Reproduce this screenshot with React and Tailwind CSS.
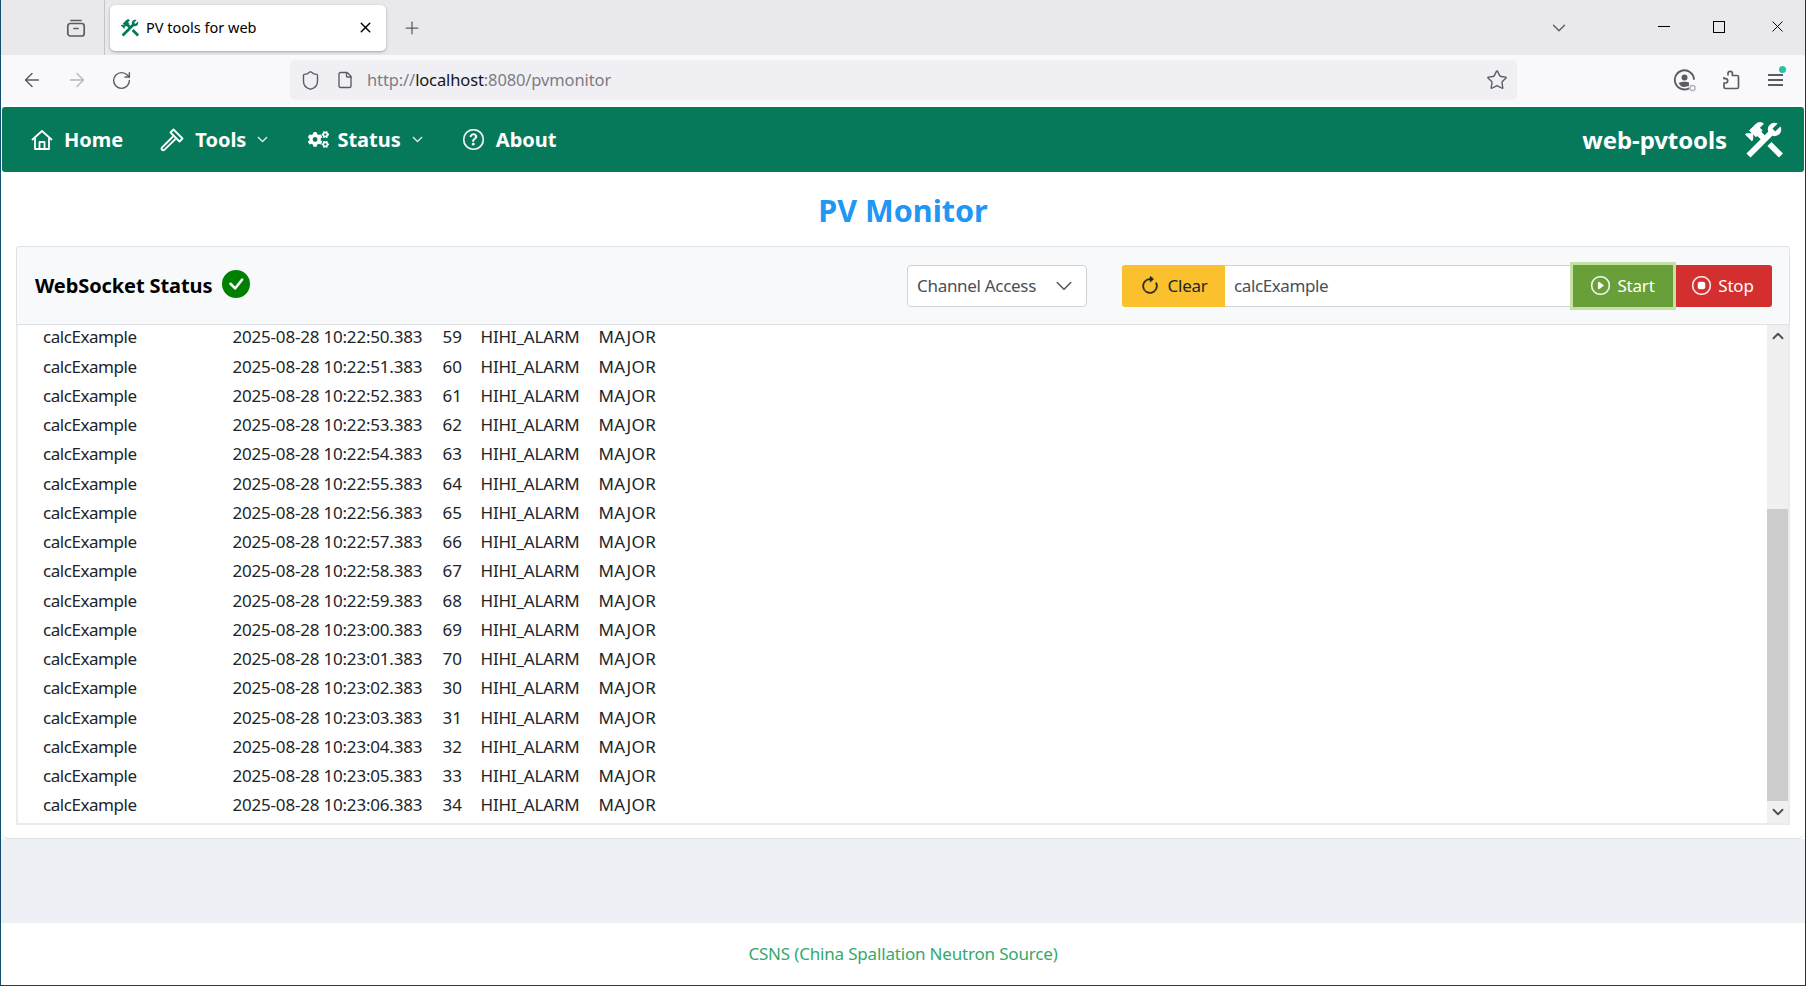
import React from 'react';
import {
  BsQuestionCircle, BsCheckCircleFill, BsArrowClockwise, BsPlayCircle,
  BsStopCircle, BsChevronDown, BsChevronUp,
} from 'react-icons/bs';
import { FaCogs } from 'react-icons/fa';
import { MdConstruction } from 'react-icons/md';
import { ArrowLeft, ArrowRight, RotateCw, Shield, File, Star, X, Plus, ChevronDown } from 'lucide-react';

const times = [
  ['10:22:50.383', 59], ['10:22:51.383', 60], ['10:22:52.383', 61], ['10:22:53.383', 62],
  ['10:22:54.383', 63], ['10:22:55.383', 64], ['10:22:56.383', 65], ['10:22:57.383', 66],
  ['10:22:58.383', 67], ['10:22:59.383', 68], ['10:23:00.383', 69], ['10:23:01.383', 70],
  ['10:23:02.383', 30], ['10:23:03.383', 31], ['10:23:04.383', 32], ['10:23:05.383', 33],
  ['10:23:06.383', 34],
];

function TabsIcon() {
  return (
    <svg viewBox="0 0 20 20" className="w-[20px] h-[20px]" fill="none" stroke="currentColor" strokeWidth="1.7">
      <path d="M5 2.5h10" strokeLinecap="round" />
      <rect x="1.8" y="5.5" width="16.4" height="12.5" rx="2.5" />
      <path d="M8 10.5h4" strokeLinecap="round" />
    </svg>
  );
}

function ProfileIcon() {
  return (
    <svg viewBox="0 0 24 24" className="w-[24px] h-[24px]" fill="none" stroke="currentColor">
      <path d="M15.5 20.6A9.6 9.6 0 1 1 21 11" strokeWidth="1.9" strokeLinecap="round" />
      <circle cx="11.5" cy="9.5" r="3" fill="currentColor" stroke="none" />
      <path d="M5.5 15c3 -1.6 8.5 -1.6 10.5 -.6v3.4c-2.5 1.4 -6.5 1.4 -8 .4z" fill="currentColor" stroke="none" />
      <circle cx="19.5" cy="20" r="2.6" stroke="#b4b4ba" strokeWidth="1.5" />
    </svg>
  );
}

function PuzzleIcon() {
  return (
    <svg viewBox="0 0 20 20" className="w-[20px] h-[20px]" fill="none" stroke="currentColor" strokeWidth="1.7" strokeLinejoin="round">
      <path d="M7 5.5V3.5a2.2 2.2 0 0 1 4.4 0v2H16a1.5 1.5 0 0 1 1.5 1.5v10A1.5 1.5 0 0 1 16 18.5H4.5A1.5 1.5 0 0 1 3 17v-4h1.5a2.2 2.2 0 0 0 0 -4.4H3V7" />
    </svg>
  );
}

function HomeIcon() {
  return (
    <svg viewBox="0 0 22 22" className="w-[22px] h-[22px] mr-[11px]" fill="none" stroke="currentColor" strokeWidth="1.8" strokeLinejoin="round" strokeLinecap="round">
      <path d="M1.5 10.5 11 2l9.5 8.5" />
      <path d="M4 9v11h14V9" />
      <path d="M8.5 20v-7h5v7" />
    </svg>
  );
}

function HammerIcon() {
  return (
    <svg viewBox="0 0 24 24" className="w-[24px] h-[24px] mr-[11px]" fill="none" stroke="currentColor" strokeWidth="1.8" strokeLinejoin="round">
      <path d="M13.5 1.5l9 9-3 3-9-9z" />
      <path d="M13 8.5 2 19.5a1.8 1.8 0 0 0 0 2.3 1.8 1.8 0 0 0 2.3 0L15.5 11" />
    </svg>
  );
}

function BrowserChrome() {
  return (
    <div className="shrink-0">
      {/* Tab strip */}
      <div className="h-[55px] bg-[#e9e9ec] flex items-center text-[#5b5b66]">
        <div className="w-[104px] h-full flex items-center justify-end pr-[18px] border-r border-[#c4c4c8] mr-[5px]">
          <TabsIcon />
        </div>
        <div className="w-[276px] h-[46px] bg-white rounded-[5px] shadow-[0_1px_3px_rgba(0,0,0,0.3)] flex items-center pl-[9px] pr-[12px] text-black">
          <MdConstruction className="w-[22px] h-[22px] text-[#06795a] shrink-0" />
          <span className="ml-[5px] text-[14.5px] flex-1">PV tools for web</span>
          <X className="w-[17px] h-[17px]" strokeWidth={2} />
        </div>
        <Plus className="w-[20px] h-[20px] ml-[16px]" strokeWidth={1.5} />
        <div className="flex-1" />
        <ChevronDown className="w-[22px] h-[22px] mr-[88px]" strokeWidth={1.5} />
        <div className="w-[12px] h-[1px] bg-black mr-[43px] mb-[2px]" />
        <div className="w-[12px] h-[12px] border border-black mr-[43px] mb-[2px]" />
        <X className="w-[19px] h-[19px] text-black mr-[18px] mb-[2px]" strokeWidth={1.2} />
      </div>
      {/* Toolbar */}
      <div className="h-[50px] bg-[#f9f9fb] flex items-center text-[#5b5b66]">
        <ArrowLeft className="w-[22px] h-[22px] ml-[20px]" strokeWidth={1.6} />
        <ArrowRight className="w-[22px] h-[22px] ml-[23px] text-[#b8b8bd]" strokeWidth={1.6} />
        <RotateCw className="w-[21px] h-[21px] ml-[23px]" strokeWidth={1.6} />
        <div className="ml-[158px] w-[1227px] h-[40px] bg-[#f0f0f4] rounded-[5px] flex items-center pl-[10px] pr-[9px]">
          <Shield className="w-[21px] h-[21px]" strokeWidth={1.6} />
          <File className="w-[18px] h-[18px] ml-[15px]" strokeWidth={1.8} />
          <span className="ml-[13px] mt-[1px] text-[16.5px] text-[#7c7c84] tracking-[-0.12px]">
            http://<span className="text-[#15141a]">localhost</span>:8080/pvmonitor
          </span>
          <div className="flex-1" />
          <Star className="w-[22px] h-[22px]" strokeWidth={1.5} />
        </div>
        <div className="ml-[156px]"><ProfileIcon /></div>
        <div className="ml-[24px]"><PuzzleIcon /></div>
        <div className="relative ml-[27px] w-[15px] flex flex-col gap-[3px]">
          <span className="block h-[2px] bg-[#5b5b66]" />
          <span className="block h-[2px] bg-[#5b5b66]" />
          <span className="block h-[2px] bg-[#5b5b66]" />
          <span className="absolute -top-[8px] -right-[3px] w-[7px] h-[7px] rounded-full bg-[#2ac3a2]" />
        </div>
      </div>
    </div>
  );
}

function NavItem({ icon, label, caret }) {
  return (
    <div className="flex items-center text-white font-bold text-[20px]">
      {icon}
      <span>{label}</span>
      {caret && <BsChevronDown className="w-[11px] h-[11px] ml-[11px] stroke-[1]" />}
    </div>
  );
}

function Navbar() {
  return (
    <div className="h-[65px] mt-[2px] mx-[1px] shrink-0 rounded-[3px] bg-[#06795a] flex items-center pl-[29px] pr-[17px]">
      <NavItem icon={<HomeIcon />} label="Home" />
      <div className="w-[37px]" />
      <NavItem icon={<HammerIcon />} label="Tools" caret />
      <div className="w-[40px]" />
      <NavItem icon={<FaCogs className="w-[21px] h-[21px] mr-[8px]" />} label="Status" caret />
      <div className="w-[40px]" />
      <NavItem icon={<BsQuestionCircle className="w-[21px] h-[21px] mr-[12px] stroke-[0.3]" />} label="About" />
      <div className="flex-1" />
      <span className="text-white font-bold text-[24px] tracking-[-0.1px]">web-pvtools</span>
      <MdConstruction className="w-[46px] h-[46px] text-white ml-[14px]" />
    </div>
  );
}

function ControlBar() {
  return (
    <div className="h-[79px] mx-[15px] shrink-0 border border-[#dee2e6] rounded-t-[3px] bg-[#f8f9fa] flex items-center pl-[18px] pr-[17px]">
      <span className="font-bold text-[20px] text-black tracking-[-0.1px]">WebSocket Status</span>
      <BsCheckCircleFill className="w-[28px] h-[28px] ml-[10px] mt-[-3px] text-[#008000]" />
      <div className="flex-1" />
      <div className="w-[180px] h-[42px] bg-white border border-[#ced4da] rounded-[4px] flex items-center pl-[9px] pr-[13px] text-[#495057] text-[17px] tracking-[-0.3px]">
        <span className="flex-1">Channel Access</span>
        <BsChevronDown className="w-[18px] h-[18px] stroke-[0.4]" />
      </div>
      <div className="flex h-[42px] ml-[35px]">
        <div className="w-[103px] bg-[#fbc02d] rounded-l-[3px] flex items-center justify-center text-[#212529] text-[17px] tracking-[-0.3px]">
          <BsArrowClockwise className="w-[20px] h-[20px] mr-[8px] stroke-[0.4]" />
          Clear
        </div>
        <div className="w-[348px] bg-white border-y border-[#ced4da] flex items-center pl-[9px] text-[#495057] text-[17px] tracking-[-0.4px]">
          calcExample
        </div>
        <div className="w-[100px] bg-[#689f38] flex items-center justify-center text-white text-[17px] tracking-[-0.2px] shadow-[0_0_0_3px_#c5e1a5] relative">
          <BsPlayCircle className="w-[19px] h-[19px] mr-[7px] stroke-[0.3]" />
          Start
        </div>
        <div className="w-[98px] ml-[1px] bg-[#d32f2f] rounded-r-[3px] flex items-center justify-center text-white text-[17px] tracking-[-0.2px]">
          <BsStopCircle className="w-[19px] h-[19px] mr-[7px] stroke-[0.3]" />
          Stop
        </div>
      </div>
    </div>
  );
}

function LogPanel() {
  return (
    <div className="h-[500px] mx-[15px] shrink-0 border-x-2 border-b-2 border-[#e9ecef] flex bg-white">
      <div className="flex-1 pl-[25px] mt-[-0.7px] text-[17px] text-[#212529] overflow-hidden">
        {times.map(([t, v]) => (
          <div key={t} className="h-[29.25px] leading-[26px] flex">
            <span className="w-[189.5px] tracking-[-0.45px]">calcExample</span>
            <span className="w-[210px] tracking-[-0.2px]">2025-08-28 {t}</span>
            <span className="w-[38px]">{v}</span>
            <span className="w-[118px] tracking-[-0.2px]">HIHI_ALARM</span>
            <span className="tracking-[0.4px]">MAJOR</span>
          </div>
        ))}
      </div>
      <div className="w-[21px] bg-[#f0f0f0] flex flex-col items-center text-[#505050]">
        <BsChevronUp className="w-[12px] h-[12px] mt-[5px] stroke-[1.5]" />
        <div className="w-full h-[292px] mt-[167px] bg-[#cdcdcd]" />
        <BsChevronDown className="w-[12px] h-[12px] mt-[5px] stroke-[1.5]" />
      </div>
    </div>
  );
}

export default function App() {
  return (
    <div className="w-[1806px] h-[986px] flex flex-col overflow-hidden bg-white border-l border-r border-b border-l-[#14506e] border-r-[#1c3358] border-b-[#1a4060] font-['Noto_Sans','Open_Sans',sans-serif]">
      <BrowserChrome />
      <Navbar />
      {/* Page body */}
      <div className="h-[667px] shrink-0 bg-white border-b border-[#dee2e6] rounded-b-[8px] flex flex-col">
        <h1 className="h-[74px] pt-[3px] shrink-0 flex items-center justify-center text-[30.5px] font-bold text-[#2196f3]">PV Monitor</h1>
        <ControlBar />
        <LogPanel />
      </div>
      <div className="h-[84px] shrink-0 bg-[#edf0f5]" />
      <div className="flex-1 flex items-center justify-center text-[17px] tracking-[-0.18px] text-[#34a86c]">
        CSNS (China Spallation Neutron Source)
      </div>
    </div>
  );
}
